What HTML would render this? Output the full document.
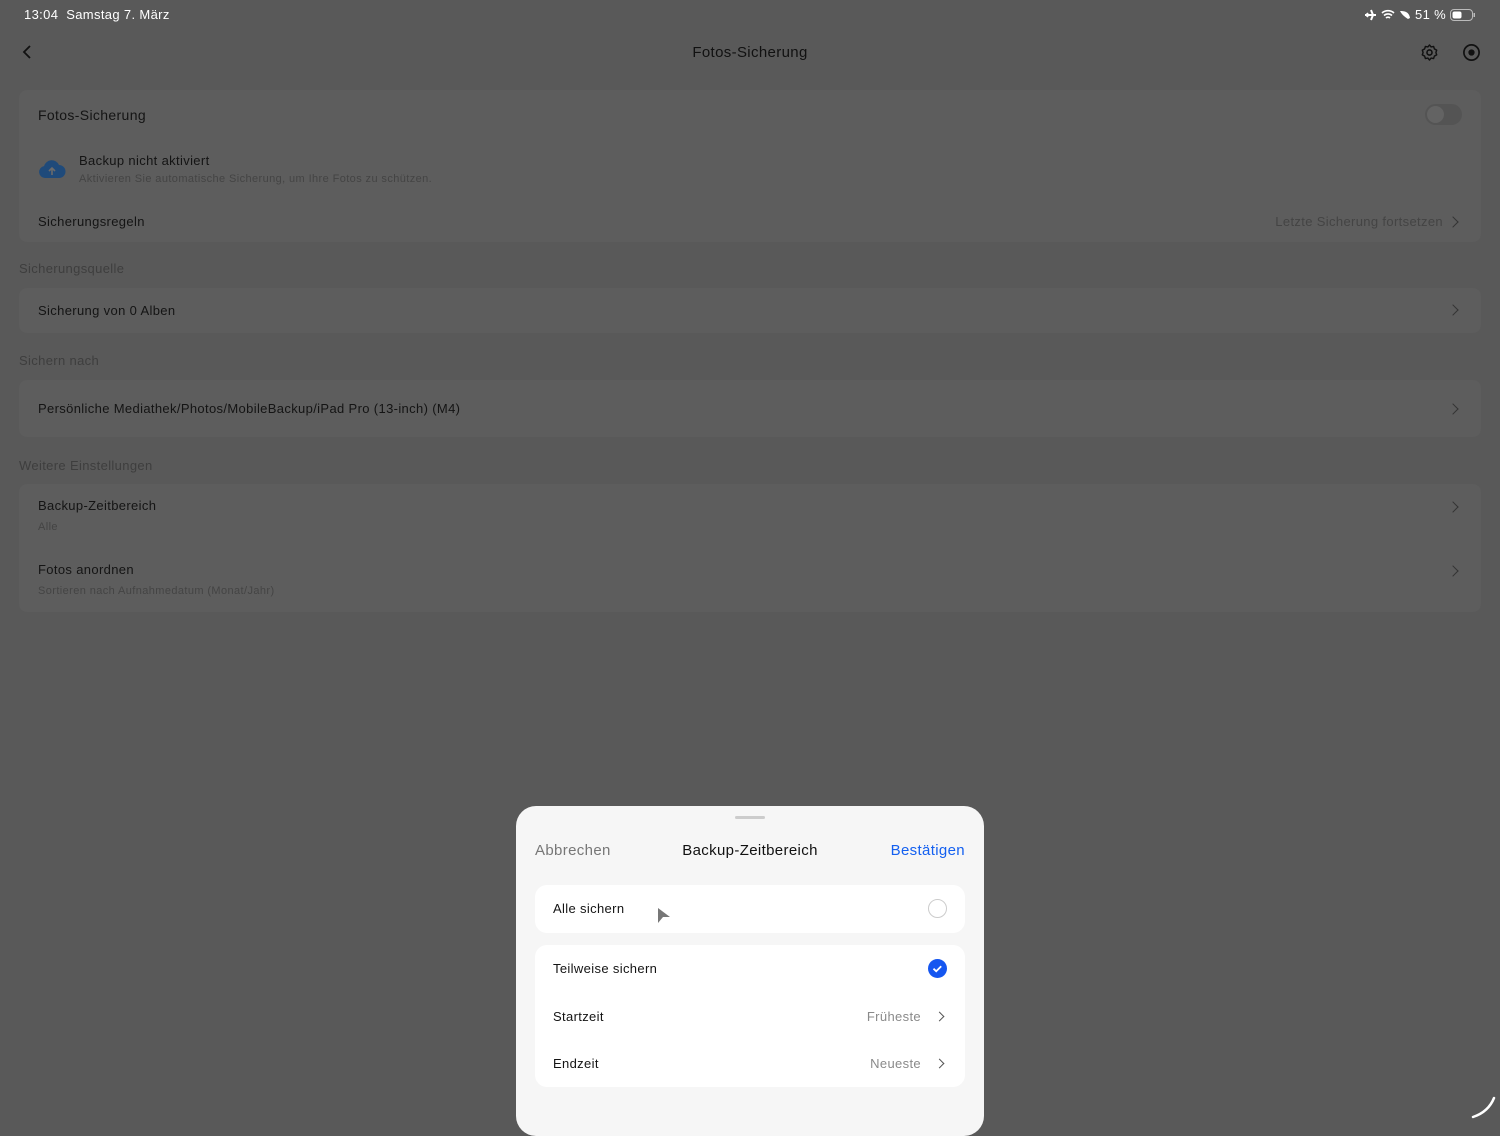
<!DOCTYPE html>
<html><head><meta charset="utf-8"><style>
*{margin:0;padding:0;box-sizing:border-box}
body{width:1500px;height:1125px;overflow:hidden;background:#595959;font-family:"Liberation Sans",sans-serif;position:relative;color:#111;letter-spacing:0.35px}
.a{position:absolute}
.card{position:absolute;left:19px;width:1462px;background:#5d5d5d;border-radius:8px}
.t{font-size:14px;color:#141414}
.s{font-size:11px;color:#444;letter-spacing:0.4px}
.h{font-size:13px;color:#3e3e3e}
.chev{position:absolute;right:24px;width:8px;height:8px;border-right:1.4px solid #333;border-top:1.4px solid #333;transform:rotate(45deg)}
.sheet{position:absolute;left:516px;top:806px;width:468px;height:330px;background:#f6f6f6;border-radius:20px}
.wc{position:absolute;left:19px;width:430px;background:#fff;border-radius:12px}
.st{font-size:14px;color:#141414;position:absolute;left:18px}
.gv{font-size:14px;color:#8a8a8a;position:absolute}
.sc{position:absolute;width:7px;height:7px;border-right:1.5px solid #555;border-top:1.5px solid #555;transform:rotate(45deg)}
</style></head><body>
<div class="a" style="left:24px;top:7px;font-size:13px;color:#fff">13:04&nbsp;&nbsp;Samstag 7. März</div>
<div class="a" style="left:1364px;top:7px;font-size:13px;color:#fff;display:flex;align-items:center;gap:4px">
<svg width="13" height="12" viewBox="0 0 13 12"><path d="M1 6h11M7 1l2 5-2 5M3 4l1 2-1 2" stroke="#fff" stroke-width="2" fill="none"/></svg>
<svg width="14" height="11" viewBox="0 0 14 11"><path d="M1 4a9 9 0 0 1 12 0M3 6.5a6 6 0 0 1 8 0M5 9a3 3 0 0 1 4 0" stroke="#fff" stroke-width="1.6" fill="none"/></svg>
<svg width="12" height="11" viewBox="0 0 12 11"><path d="M1 2c5 0 9 1 10 7L9 10C6 8 3 6 1 2z" fill="#fff"/></svg>
<span>51 %</span>
<svg width="26" height="12" viewBox="0 0 26 12"><rect x="0.5" y="0.5" width="22" height="11" rx="3.5" stroke="#bbb" fill="none"/><rect x="2.5" y="2.5" width="9" height="7" rx="2" fill="#fff"/><rect x="23.5" y="4" width="1.5" height="4" fill="#bbb"/></svg></div>
<svg class="a" style="left:21px;top:44px" width="12" height="16" viewBox="0 0 12 16"><path d="M9 2L3 8l6 6" stroke="#111" stroke-width="1.8" fill="none"/></svg>
<div class="a" style="left:0;width:1500px;top:44px;text-align:center;font-size:15px;color:#111">Fotos-Sicherung</div>
<svg class="a" style="left:1420px;top:43px" width="19" height="19" viewBox="0 0 24 24"><circle cx="12" cy="12" r="3.2" stroke="#111" stroke-width="2" fill="none"/><path d="M12 2.5l2 2.5 3.2-.6 1 3.1 2.9 1.5-1 3 1 3-2.9 1.5-1 3.1-3.2-.6-2 2.5-2-2.5-3.2.6-1-3.1L2.9 15l1-3-1-3 2.9-1.5 1-3.1 3.2.6z" stroke="#111" stroke-width="1.8" fill="none" stroke-linejoin="round"/></svg>
<svg class="a" style="left:1462px;top:43px" width="19" height="19" viewBox="0 0 20 20"><circle cx="10" cy="10" r="8" stroke="#111" stroke-width="1.8" fill="none"/><circle cx="10" cy="10" r="3.3" fill="#111"/></svg>

<div class="card" style="top:90px;height:152px">
<div class="a t" style="left:19px;top:17px">Fotos-Sicherung</div>
<div class="a" style="right:19px;top:14px;width:37px;height:21px;border-radius:11px;background:#545454"><div class="a" style="left:2px;top:2px;width:17px;height:17px;border-radius:50%;background:#636363"></div></div>
<svg class="a" style="left:19px;top:68px" width="28" height="22" viewBox="0 0 28 22"><path d="M7 20a6 6 0 0 1-1-11.9A8 8 0 0 1 21 7a6.5 6.5 0 0 1 0 13z" fill="#1f4a7a"/><path d="M14 17v-6M11 13l3-3 3 3" stroke="#6b6b6b" stroke-width="1.6" fill="none"/></svg>
<div class="a t" style="left:60px;top:63px;font-size:13px">Backup nicht aktiviert</div>
<div class="a s" style="left:60px;top:83px">Aktivieren Sie automatische Sicherung, um Ihre Fotos zu schützen.</div>
<div class="a t" style="left:19px;top:124px;font-size:13px">Sicherungsregeln</div>
<div class="a" style="right:38px;top:124px;font-size:13px;color:#444">Letzte Sicherung fortsetzen</div>
<div class="chev" style="top:128px"></div>
</div>
<div class="a h" style="left:19px;top:261px">Sicherungsquelle</div>
<div class="card" style="top:288px;height:45px"><div class="a t" style="left:19px;top:15px;font-size:13px">Sicherung von 0 Alben</div><div class="chev" style="top:18px"></div></div>
<div class="a h" style="left:19px;top:353px">Sichern nach</div>
<div class="card" style="top:380px;height:57px"><div class="a t" style="left:19px;top:21px;font-size:13px">Persönliche Mediathek/Photos/MobileBackup/iPad Pro (13-inch) (M4)</div><div class="chev" style="top:25px"></div></div>
<div class="a h" style="left:19px;top:458px">Weitere Einstellungen</div>
<div class="card" style="top:484px;height:128px">
<div class="a t" style="left:19px;top:14px;font-size:13px">Backup-Zeitbereich</div>
<div class="a s" style="left:19px;top:37px">Alle</div><div class="chev" style="top:19px"></div>
<div class="a t" style="left:19px;top:78px;font-size:13px">Fotos anordnen</div>
<div class="a s" style="left:19px;top:101px">Sortieren nach Aufnahmedatum (Monat/Jahr)</div><div class="chev" style="top:83px"></div>
</div>

<div class="sheet">
<div class="a" style="left:219px;top:10px;width:30px;height:3px;border-radius:2px;background:#ccc"></div>
<div class="a" style="left:19px;top:36px;font-size:15px;color:#777">Abbrechen</div>
<div class="a" style="left:0;width:468px;top:36px;text-align:center;font-size:15px;color:#111">Backup-Zeitbereich</div>
<div class="a" style="right:19px;top:36px;font-size:15px;color:#1460f0">Bestätigen</div>
<div class="wc" style="top:79px;height:48px">
<div class="st" style="top:16px;font-size:13px">Alle sichern</div>
<svg class="a" style="left:122px;top:22px" width="14" height="18" viewBox="0 0 14 18"><path d="M1 1l12 9H6l-5 6z" fill="#777"/></svg>
<div class="a" style="right:18px;top:14px;width:19px;height:19px;border-radius:50%;border:1.3px solid #ccc"></div>
</div>
<div class="wc" style="top:139px;height:142px">
<div class="st" style="top:16px;font-size:13px">Teilweise sichern</div>
<svg class="a" style="right:18px;top:14px" width="19" height="19" viewBox="0 0 19 19"><circle cx="9.5" cy="9.5" r="9.5" fill="#1556f0"/><path d="M5.5 9.7l2.7 2.6 5-5" stroke="#fff" stroke-width="1.8" fill="none"/></svg>
<div class="st" style="top:64px;font-size:13px">Startzeit</div>
<div class="gv" style="right:44px;top:64px;font-size:13px">Früheste</div>
<div class="sc" style="right:22px;top:68px"></div>
<div class="st" style="top:111px;font-size:13px">Endzeit</div>
<div class="gv" style="right:44px;top:111px;font-size:13px">Neueste</div>
<div class="sc" style="right:22px;top:115px"></div>
</div>
</div>
<svg class="a" style="left:1470px;top:1095px" width="28" height="26" viewBox="0 0 28 26"><path d="M3 22c9-3 17-9 21-19" stroke="#fff" stroke-width="2.5" fill="none" stroke-linecap="round"/></svg>
</body></html>
